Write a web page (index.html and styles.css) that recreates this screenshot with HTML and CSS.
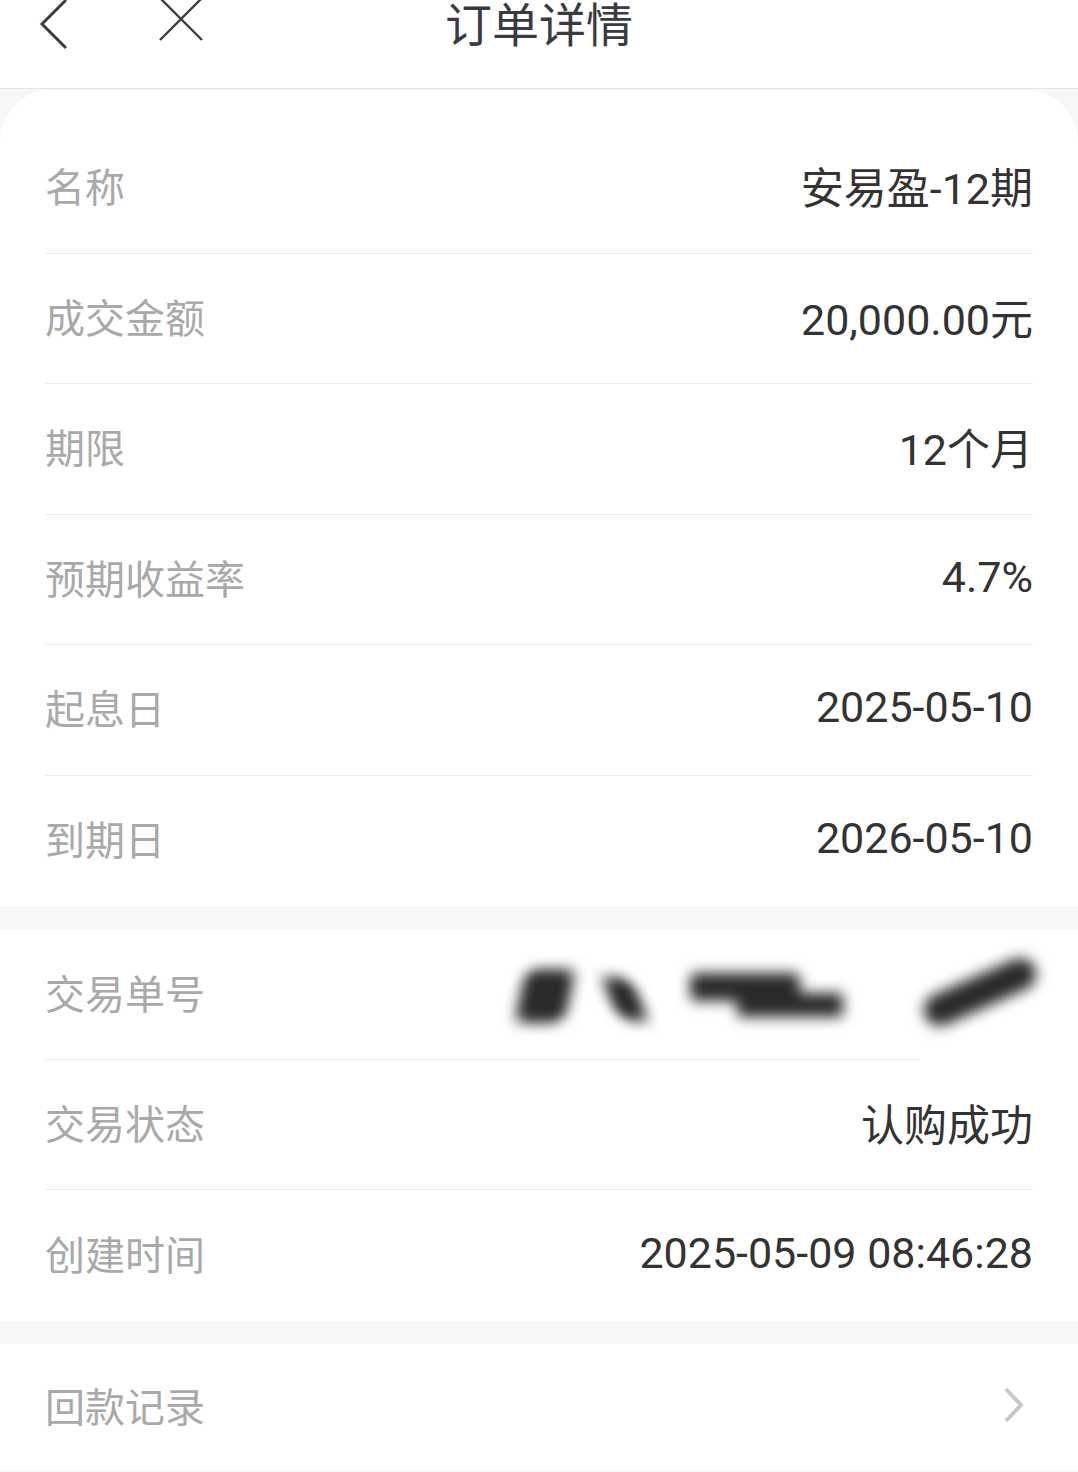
FILE: index.html
```html
<!DOCTYPE html>
<html lang="zh-CN">
<head>
	<meta charset="utf-8" />
	<title>订单详情</title>
	<link rel="stylesheet" href="styles.css">
</head>
<body>
	<header class="topbar">
		<div class="nav">
			<svg class="back" width="34" height="52" viewBox="0 0 34 52"><path d="M28 2 L4 26 L28 50" fill="none" stroke="#3c3c44" stroke-width="3"/></svg>
			<svg class="close" width="46" height="46" viewBox="0 0 46 46"><path d="M2 2 L44 44 M44 2 L2 44" fill="none" stroke="#3c3c44" stroke-width="2.4"/></svg>
		</div>
		<h1>订单详情</h1>
	</header>

	<section class="card first">
		<div class="row"><span class="label">名称</span><span class="value">安易盈-12期</span></div>
		<div class="row"><span class="label">成交金额</span><span class="value">20,000.00元</span></div>
		<div class="row"><span class="label">期限</span><span class="value">12个月</span></div>
		<div class="row"><span class="label">预期收益率</span><span class="value">4.7%</span></div>
		<div class="row"><span class="label">起息日</span><span class="value">2025-05-10</span></div>
		<div class="row"><span class="label">到期日</span><span class="value">2026-05-10</span></div>
	</section>

	<section class="card">
		<div class="row short"><span class="label">交易单号</span>
			<span class="value masked">
				<i class="blob b1"></i><i class="blob b2"></i><i class="blob b3"></i><i class="blob b4"></i>
			</span>
		</div>
		<div class="row"><span class="label">交易状态</span><span class="value">认购成功</span></div>
		<div class="row"><span class="label">创建时间</span><span class="value">2025-05-09 08:46:28</span></div>
	</section>

	<section class="card">
		<div class="row link"><span class="label">回款记录</span>
			<svg class="arrow" width="22" height="36" viewBox="0 0 22 36"><path d="M3 2 L18 18 L3 34" fill="none" stroke="#c8c8c8" stroke-width="4"/></svg>
		</div>
	</section>
</body>
</html>
```

FILE: styles.css
```css
body {
	margin: 0;
	background: #f7f7f7;
	font-family: Roboto, "Noto Sans CJK SC", sans-serif;
}

.topbar {
	position: relative;
	height: 88px;
	background: #fff;
	border-bottom: 1px solid #e4e4e4;
}

.topbar h1 {
	margin: 0;
	padding-top: 2px;
	text-align: center;
	font-size: 47px;
	font-weight: 400;
	line-height: 48px;
	color: #3a3a42;
}

.nav {
	position: absolute;
	left: 38px;
	top: -2px;
	display: flex;
	gap: 86px;
}

.nav .close {
	margin-top: -2px;
}

.card {
	background: #fff;
	padding: 0 45px;
	margin-bottom: 23px;
}

.card.first {
	margin-top: 1px;
	padding-top: 33px;
	border-radius: 52px 52px 0 0;
}

.row {
	box-sizing: border-box;
	display: flex;
	justify-content: space-between;
	align-items: center;
	height: 130.5px;
	padding-bottom: 5px;
	border-bottom: 1px solid #ececec;
	font-size: 40px;
}

.row:last-child {
	border-bottom: none;
}

.row.short {
	border-bottom: none;
	background: linear-gradient(#ececec, #ececec) no-repeat left bottom / 875px 1px;
}

.label {
	color: #a9a9a9;
}

.value {
	color: #333;
	font-size: 43px;
}

.masked {
	display: flex;
	align-items: center;
	margin-right: -7px;
	height: 80px;
}

.blob {
	display: block;
	background: #2a2a2a;
	filter: blur(7px);
	border-radius: 12px;
}

.b1 { width: 50px; height: 54px; margin-top: 8px; transform: skewX(-12deg); }
.b2 { width: 30px; height: 44px; margin-left: 40px; margin-top: 14px; transform: skewX(24deg); }
.b3 { width: 110px; height: 28px; margin-left: 50px; margin-top: -10px; border-radius: 6px; box-shadow: 45px 18px 0 -2px #2a2a2a; }
.b4 { width: 120px; height: 32px; margin-left: 120px; transform: rotate(-24deg); border-radius: 30px; }

.row.link {
	height: 127px;
}

.arrow {
	margin-right: 8px;
}
```
